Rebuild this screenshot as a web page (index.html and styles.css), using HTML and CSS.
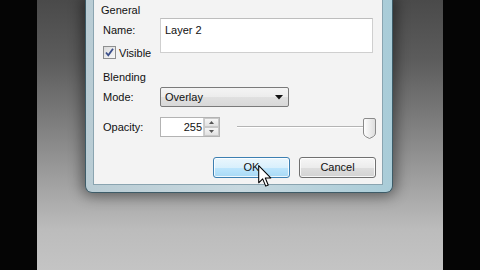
FILE: index.html
```html
<!DOCTYPE html>
<html>
<head>
<meta charset="utf-8">
<link rel="stylesheet" href="styles.css">
</head>
<body>
<div class="screen">
  <div class="bar"></div>
  <div class="stage">
    <div class="dialog">
      <div class="content">
        <div class="group-title">General</div>
        <div class="name-block">
          <div class="label name-label">Name:</div>
          <div class="textbox">Layer 2</div>
          <label class="check-row">
            <span class="checkbox">
              <svg width="11" height="11" viewBox="0 0 11 11"><path d="M2 5.5 L4.3 8.3 L9 1.8" fill="none" stroke="#3b4f8a" stroke-width="1.8"/></svg>
            </span>
            <span>Visible</span>
          </label>
        </div>
        <div class="group-title blending">Blending</div>
        <div class="row mode-row">
          <div class="label">Mode:</div>
          <div class="select">
            <span>Overlay</span>
            <svg class="arrow" width="8" height="5" viewBox="0 0 8 5"><path d="M0 0 H8 L4 4.5 Z" fill="#111"/></svg>
          </div>
        </div>
        <div class="row opacity-row">
          <div class="label">Opacity:</div>
          <div class="spin">
            <div class="spin-value">255</div>
            <div class="spin-buttons">
              <div class="spin-btn"><svg width="5" height="3" viewBox="0 0 5 3"><path d="M0 3 L2.5 0 L5 3 Z" fill="#555"/></svg></div>
              <div class="spin-btn"><svg width="5" height="3" viewBox="0 0 5 3"><path d="M0 0 L2.5 3 L5 0 Z" fill="#555"/></svg></div>
            </div>
          </div>
          <div class="slider">
            <div class="track"></div>
            <svg class="thumb" width="13" height="21" viewBox="0 0 13 21">
              <defs>
                <linearGradient id="tg" x1="0" y1="0" x2="1" y2="0">
                  <stop offset="0" stop-color="#ffffff"/>
                  <stop offset="1" stop-color="#dcdcdc"/>
                </linearGradient>
              </defs>
              <path d="M2 0.5 H11 Q12.5 0.5 12.5 2 V15 Q12.5 17 10.5 18.5 L6.5 20.5 L2.5 18.5 Q0.5 17 0.5 15 V2 Q0.5 0.5 2 0.5 Z" fill="url(#tg)" stroke="#8a8a8a"/>
            </svg>
          </div>
        </div>
        <div class="buttons">
          <div class="btn btn-hot">OK</div>
          <div class="btn">Cancel</div>
        </div>
      </div>
    </div>
    <svg class="cursor" width="15" height="23" viewBox="0 0 14 22">
      <path d="M0.5 0.5 V17 L4.3 13.3 L7.2 20.2 L9.6 19.2 L6.8 12.4 H12 Z" fill="#fff" stroke="#000" stroke-width="1" stroke-linejoin="round"/>
    </svg>
  </div>
  <div class="bar"></div>
</div>
</body>
</html>
```
FILE: styles.css
```css
html, body {
  margin: 0;
  padding: 0;
  background: #000;
}

.screen {
  display: flex;
  width: 480px;
  height: 270px;
  overflow: hidden;
  font-family: "Liberation Sans", Arial, sans-serif;
  font-size: 11px;
  color: #111;
}

.bar {
  width: 37px;
  flex: none;
  background: #050505;
}

.stage {
  position: relative;
  flex: 1;
  padding-left: 48px;
  background: linear-gradient(180deg, #4a4a4a 0px, #5c5c5c 60px, #7c7c7c 120px, #a2a2a2 185px, #bcbcbc 230px, #c4c4c4 270px);
}

.dialog {
  width: 308px;
  height: 193px;
  box-sizing: border-box;
  padding: 0 9px 7px 7px;
  border: 1px solid #3e5c68;
  border-top: none;
  border-radius: 0 0 7px 7px;
  background: linear-gradient(90deg, #b9ccd4 0%, #c7d8df 50%, #a9ccd8 100%);
  box-shadow: 0 0 14px 3px rgba(0, 0, 0, 0.45);
}

.content {
  height: 185px;
  box-sizing: border-box;
  padding: 4px 0 0 9px;
  background: #f3f3f3;
  border: 1px solid #8aa4b0;
  border-top: none;
}

.group-title {
  height: 13px;
  line-height: 13px;
  margin-left: -2px;
}

.blending {
  margin-top: 9px;
  margin-left: 0;
}

.label {
  width: 57px;
  flex: none;
}

.name-block {
  margin-top: 1px;
  display: grid;
  grid-template-columns: 57px 213px;
  grid-template-rows: 22px 22px;
}

.name-label {
  padding-top: 6px;
  line-height: 13px;
}

.textbox {
  grid-column: 2;
  grid-row: 1 / 3;
  height: 35px;
  box-sizing: border-box;
  padding: 5px 4px;
  line-height: 13px;
  background: #fff;
  border: 1px solid #cfcfcf;
  border-top-color: #bdbdbd;
}

.check-row {
  grid-column: 1;
  grid-row: 2;
  display: flex;
  align-items: center;
  gap: 3px;
  padding-top: 6px;
  height: 13px;
}

.checkbox {
  width: 13px;
  height: 13px;
  box-sizing: border-box;
  border: 1px solid #8e8f8f;
  background: linear-gradient(135deg, #dcdcdc, #f8f8f8);
  display: flex;
  align-items: center;
  justify-content: center;
}

.row {
  display: flex;
  align-items: center;
  height: 20px;
}

.mode-row {
  margin-top: 3px;
}

.select {
  width: 129px;
  height: 20px;
  box-sizing: border-box;
  border: 1px solid #7a7a7a;
  border-radius: 2px;
  background: linear-gradient(180deg, #f4f4f4 0%, #ececec 50%, #e0e0e0 51%, #d8d8d8 100%);
  display: flex;
  align-items: center;
  justify-content: space-between;
  padding: 0 5px 0 4px;
}

.opacity-row {
  margin-top: 10px;
}

.spin {
  width: 60px;
  height: 20px;
  box-sizing: border-box;
  border: 1px solid #b3b3b3;
  background: #fff;
  display: flex;
}

.spin-value {
  flex: 1;
  text-align: right;
  line-height: 18px;
  padding-right: 1px;
}

.spin-buttons {
  width: 15px;
  display: flex;
  flex-direction: column;
  border-left: 1px solid #d0d0d0;
}

.spin-btn {
  flex: 1;
  display: flex;
  align-items: center;
  justify-content: center;
  background: linear-gradient(180deg, #f6f6f6, #e2e2e2);
  border: 1px solid #c9c9c9;
}

.slider {
  margin-left: 17px;
  width: 139px;
  height: 21px;
  display: flex;
  align-items: center;
}

.track {
  flex: 1;
  height: 1px;
  background: #b4b4b4;
  border-bottom: 1px solid #ffffff;
}

.thumb {
  flex: none;
  margin-left: -5px;
  margin-top: 2px;
}

.buttons {
  margin-top: 20px;
  margin-left: 110px;
  display: flex;
  gap: 9px;
}

.btn {
  width: 77px;
  height: 21px;
  box-sizing: border-box;
  border: 1px solid #707070;
  border-radius: 3px;
  background: linear-gradient(180deg, #f6f6f6 0%, #ececec 50%, #dedede 51%, #d2d2d2 100%);
  text-align: center;
  line-height: 19px;
  box-shadow: inset 0 0 0 1px rgba(255, 255, 255, 0.8);
}

.btn-hot {
  border-color: #3c7fb1;
  background: linear-gradient(180deg, #eaf6fd 0%, #d9f0fc 50%, #bee6fd 51%, #a7d9f5 100%);
}

.cursor {
  position: absolute;
  left: 221px;
  top: 165px;
}
```
